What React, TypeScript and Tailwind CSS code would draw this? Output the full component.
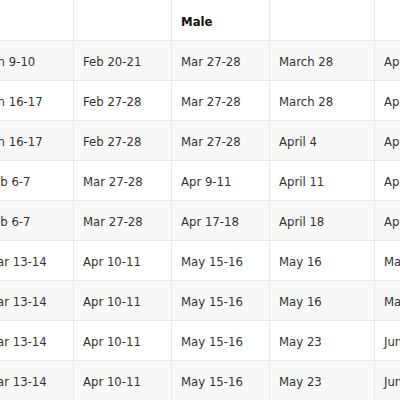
import React from 'react';

const rows: string[][] = [
  ['Jan 9-10', 'Feb 20-21', 'Mar 27-28', 'March 28', 'April 4'],
  ['Jan 16-17', 'Feb 27-28', 'Mar 27-28', 'March 28', 'April 4'],
  ['Jan 16-17', 'Feb 27-28', 'Mar 27-28', 'April 4', 'April 11'],
  ['Feb 6-7', 'Mar 27-28', 'Apr 9-11', 'April 11', 'April 18'],
  ['Feb 6-7', 'Mar 27-28', 'Apr 17-18', 'April 18', 'April 25'],
  ['Mar 13-14', 'Apr 10-11', 'May 15-16', 'May 16', 'May 23'],
  ['Mar 13-14', 'Apr 10-11', 'May 15-16', 'May 16', 'May 23'],
  ['Mar 13-14', 'Apr 10-11', 'May 15-16', 'May 23', 'June 6'],
  ['Mar 13-14', 'Apr 10-11', 'May 15-16', 'May 23', 'June 6'],
];

const header = ['', '', 'Male', '', ''];

const cols = 'grid grid-cols-[96px_98px_98px_105px_120px]';
const cellClass = 'flex items-center pl-[9px] pt-[5px] border-r border-b border-[#e8e8e8] whitespace-nowrap';

export default function App() {
  return (
    <div className="w-[400px] h-[400px] overflow-hidden bg-white text-[#333] text-[11.7px] font-['DejaVu_Sans',Verdana,sans-serif]">
      <div className="-ml-[22px]">
        <div className={`${cols} h-[41px]`}>
          {header.map((h, i) => (
            <div key={i} className={`${cellClass} font-bold text-[#111]`}>
              {h}
            </div>
          ))}
        </div>
        {rows.map((r, i) => (
          <div key={i} className={`${cols} h-10 ${i % 2 === 0 ? 'bg-[#f8f8f8]' : 'bg-white'}`}>
            {r.map((c, j) => (
              <div key={j} className={cellClass}>
                {c}
              </div>
            ))}
          </div>
        ))}
      </div>
    </div>
  );
}
